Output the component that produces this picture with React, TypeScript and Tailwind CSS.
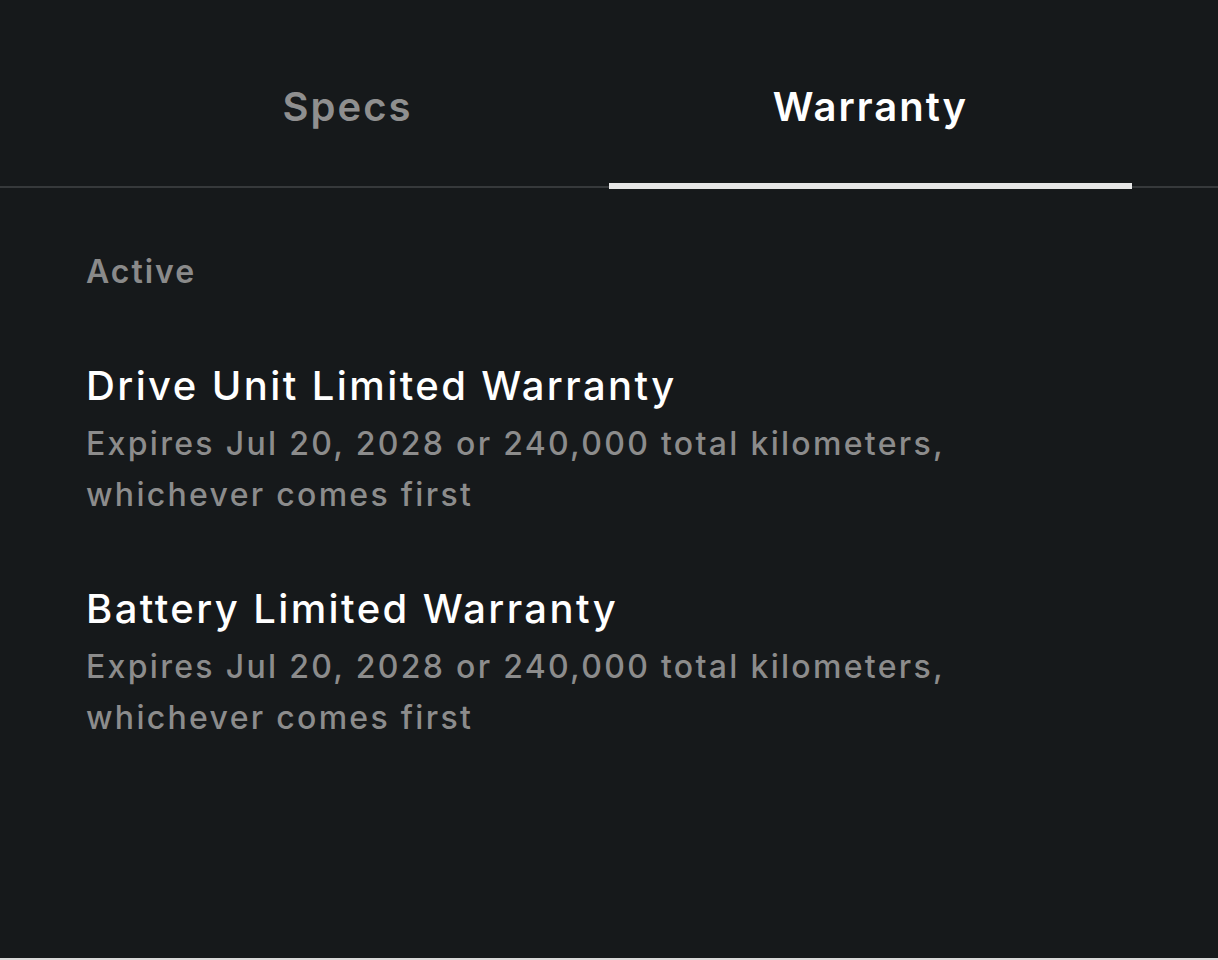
import React, { useState } from "react";

type Warranty = { title: string; detail: string };

const warranties: Warranty[] = [
  {
    title: "Drive Unit Limited Warranty",
    detail: "Expires Jul 20, 2028 or 240,000 total kilometers, whichever comes first",
  },
  {
    title: "Battery Limited Warranty",
    detail: "Expires Jul 20, 2028 or 240,000 total kilometers, whichever comes first",
  },
];

export default function App() {
  const [tab, setTab] = useState<"specs" | "warranty">("warranty");

  return (
    <div className="w-[1218px] h-[960px] bg-[#d9d9d9] font-['Inter',sans-serif]">
      <div className="h-[958px] bg-[#16191b] pt-[62px]">
        <div className="border-b-2 border-[#36393b]">
          <div className="mx-[86px] flex">
            {(["specs", "warranty"] as const).map((t) => (
              <button
                key={t}
                onClick={() => setTab(t)}
                className={`flex-1 h-[127px] flex items-start justify-center pt-[15px] text-[40px] font-semibold tracking-[2px] -mb-[3px] border-b-[6px] ${
                  tab === t ? "text-white border-[#e6e6e6]" : "text-[#8f8f8f] border-transparent"
                }`}
              >
                {t === "specs" ? "Specs" : "Warranty"}
              </button>
            ))}
          </div>
        </div>

        {tab === "warranty" && (
          <div className="px-[86px] pt-[66px]">
            <div className="text-[32px] font-semibold tracking-[2px] text-[#8a8a8a] leading-[36px]">Active</div>
            <div className="mt-[72px] flex flex-col gap-[65px]">
              {warranties.map((w) => (
                <div key={w.title}>
                  <h2 className="text-[40px] font-medium tracking-[2.4px] text-white leading-[48px]">{w.title}</h2>
                  <p className="mt-[8px] w-[920px] text-[32px] font-medium tracking-[2.3px] text-[#8c8c8c] leading-[51px]">
                    {w.detail}
                  </p>
                </div>
              ))}
            </div>
          </div>
        )}
      </div>
    </div>
  );
}
